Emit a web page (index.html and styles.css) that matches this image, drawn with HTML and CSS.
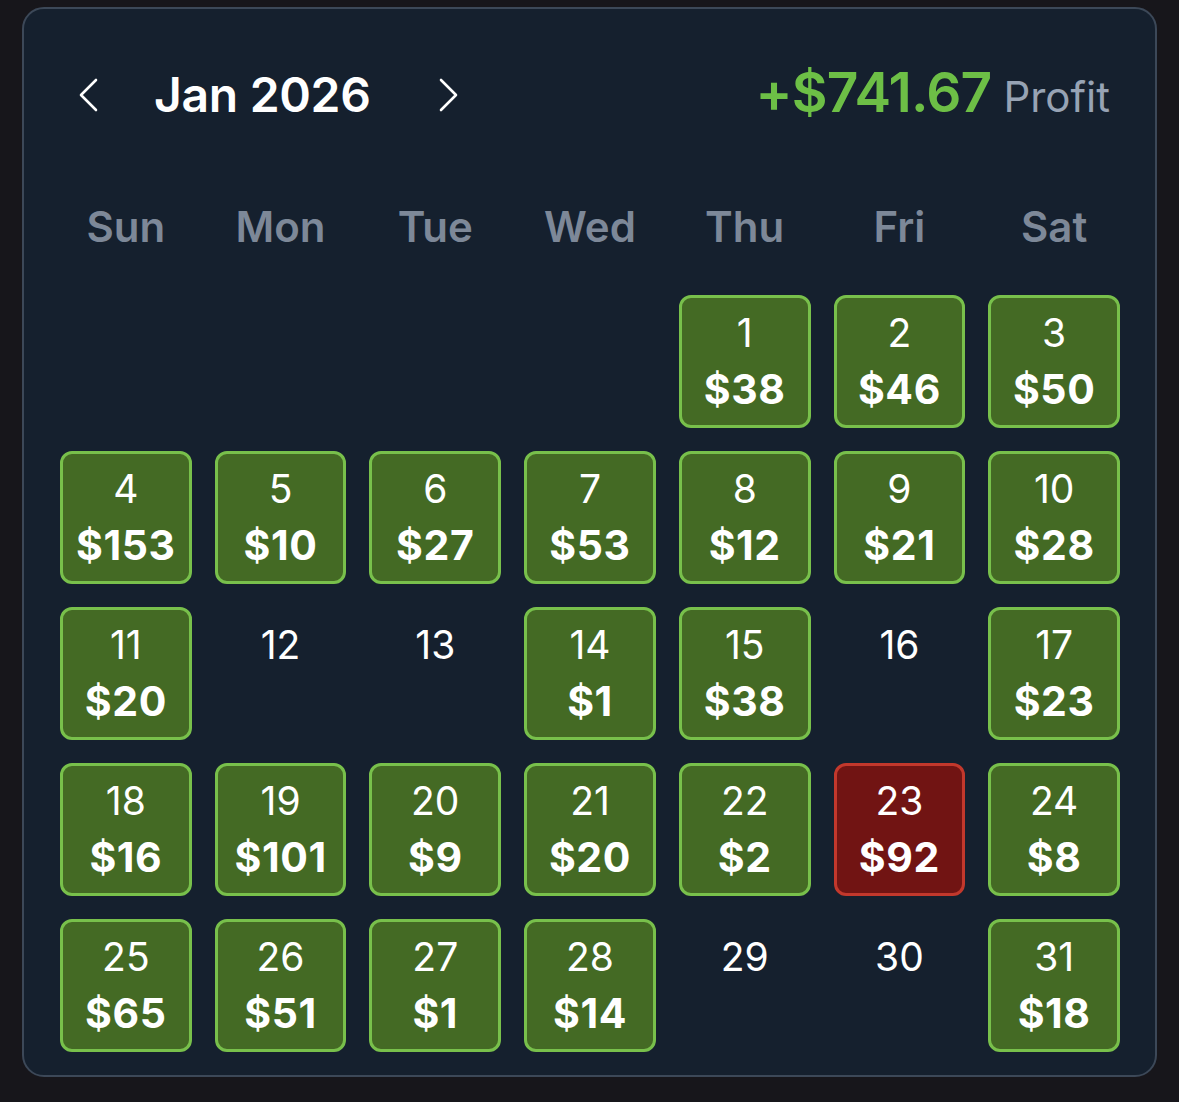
FILE: index.html
```html
<!DOCTYPE html>
<html lang="en">
<head>
<meta charset="utf-8">
<title>Jan 2026 Profit Calendar</title>
<link rel="stylesheet" href="styles.css">
</head>
<body>
<div class="card">
  <div class="header">
    <button class="nav nav-prev" aria-label="Previous month">
      <svg width="20" height="34" viewBox="0 0 20 34"><polyline points="17,2 2,17 17,32" fill="none" stroke="#ffffff" stroke-width="2.6" stroke-linecap="round" stroke-linejoin="round"/></svg>
    </button>
    <div class="title">Jan 2026</div>
    <button class="nav nav-next" aria-label="Next month">
      <svg width="20" height="34" viewBox="0 0 20 34"><polyline points="3,2 18,17 3,32" fill="none" stroke="#ffffff" stroke-width="2.6" stroke-linecap="round" stroke-linejoin="round"/></svg>
    </button>
    <div class="total"><span class="total-amount">+$741.67</span><span class="total-label">Profit</span></div>
  </div>

  <div class="weekdays">
    <div>Sun</div><div>Mon</div><div>Tue</div><div>Wed</div><div>Thu</div><div>Fri</div><div>Sat</div>
  </div>

  <div class="grid">
    <div class="cell blank"></div>
    <div class="cell blank"></div>
    <div class="cell blank"></div>
    <div class="cell blank"></div>
    <div class="cell win"><span class="num">1</span><span class="amt">$38</span></div>
    <div class="cell win"><span class="num">2</span><span class="amt">$46</span></div>
    <div class="cell win"><span class="num">3</span><span class="amt">$50</span></div>

    <div class="cell win"><span class="num">4</span><span class="amt">$153</span></div>
    <div class="cell win"><span class="num">5</span><span class="amt">$10</span></div>
    <div class="cell win"><span class="num">6</span><span class="amt">$27</span></div>
    <div class="cell win"><span class="num">7</span><span class="amt">$53</span></div>
    <div class="cell win"><span class="num">8</span><span class="amt">$12</span></div>
    <div class="cell win"><span class="num">9</span><span class="amt">$21</span></div>
    <div class="cell win"><span class="num">10</span><span class="amt">$28</span></div>

    <div class="cell win"><span class="num">11</span><span class="amt">$20</span></div>
    <div class="cell"><span class="num">12</span></div>
    <div class="cell"><span class="num">13</span></div>
    <div class="cell win"><span class="num">14</span><span class="amt">$1</span></div>
    <div class="cell win"><span class="num">15</span><span class="amt">$38</span></div>
    <div class="cell"><span class="num">16</span></div>
    <div class="cell win"><span class="num">17</span><span class="amt">$23</span></div>

    <div class="cell win"><span class="num">18</span><span class="amt">$16</span></div>
    <div class="cell win"><span class="num">19</span><span class="amt">$101</span></div>
    <div class="cell win"><span class="num">20</span><span class="amt">$9</span></div>
    <div class="cell win"><span class="num">21</span><span class="amt">$20</span></div>
    <div class="cell win"><span class="num">22</span><span class="amt">$2</span></div>
    <div class="cell loss"><span class="num">23</span><span class="amt">$92</span></div>
    <div class="cell win"><span class="num">24</span><span class="amt">$8</span></div>

    <div class="cell win"><span class="num">25</span><span class="amt">$65</span></div>
    <div class="cell win"><span class="num">26</span><span class="amt">$51</span></div>
    <div class="cell win"><span class="num">27</span><span class="amt">$1</span></div>
    <div class="cell win"><span class="num">28</span><span class="amt">$14</span></div>
    <div class="cell"><span class="num">29</span></div>
    <div class="cell"><span class="num">30</span></div>
    <div class="cell win"><span class="num">31</span><span class="amt">$18</span></div>
  </div>
</div>
</body>
</html>
```

FILE: styles.css
```css
* { box-sizing: border-box; }

html, body {
  margin: 0;
  padding: 0;
  background: #17161b;
}

body {
  padding: 7px 22px 0 22px;
  font-family: Inter, "Liberation Sans", sans-serif;
  color: #ffffff;
}

.card {
  width: 1135px;
  height: 1070px;
  background: #15202e;
  border: 2px solid #3c4858;
  border-radius: 22px;
  padding: 0 35px 23px 36px;
}

.header {
  display: flex;
  align-items: center;
  height: 70px;
  margin-top: 51px;
}

.nav {
  background: none;
  border: none;
  padding: 0;
  width: 20px;
  height: 34px;
  display: flex;
  align-items: center;
  justify-content: center;
  cursor: pointer;
}

.nav-prev { margin-left: 19px; }

.title {
  margin-left: 55px;
  font-size: 48px;
  font-weight: 600;
  letter-spacing: -0.3px;
  color: #ffffff;
  line-height: 70px;
}

.nav-next { margin-left: 67px; }

.total {
  margin-left: auto;
  margin-right: 10px;
  margin-top: -6px;
  display: flex;
  align-items: baseline;
  gap: 12px;
}

.total-amount {
  font-size: 55px;
  font-weight: 600;
  letter-spacing: -0.8px;
  color: #6dbf46;
}

.total-label {
  font-size: 42px;
  font-weight: 400;
  color: #97a3b4;
}

.weekdays {
  display: grid;
  grid-template-columns: repeat(7, 1fr);
  column-gap: 23px;
  margin-top: 72px;
  height: 50px;
  line-height: 50px;
  text-align: center;
  font-size: 42px;
  font-weight: 600;
  color: #7d8898;
}

.grid {
  display: grid;
  grid-template-columns: repeat(7, 1fr);
  grid-auto-rows: 133px;
  column-gap: 23px;
  row-gap: 23px;
  margin-top: 43px;
}

.cell {
  border: 3px solid transparent;
  border-radius: 12px;
  display: flex;
  flex-direction: column;
  align-items: center;
  padding-top: 13px;
}

.cell.win {
  background: #446a24;
  border-color: #78c04b;
}

.cell.loss {
  background: #711413;
  border-color: #c2382c;
}

.num {
  font-size: 39px;
  font-weight: 400;
  line-height: 44px;
  height: 44px;
  color: #ffffff;
}

.amt {
  margin-top: 10px;
  font-size: 41px;
  font-weight: 700;
  line-height: 48px;
  height: 48px;
  letter-spacing: 0.6px;
  color: #ffffff;
}
```
